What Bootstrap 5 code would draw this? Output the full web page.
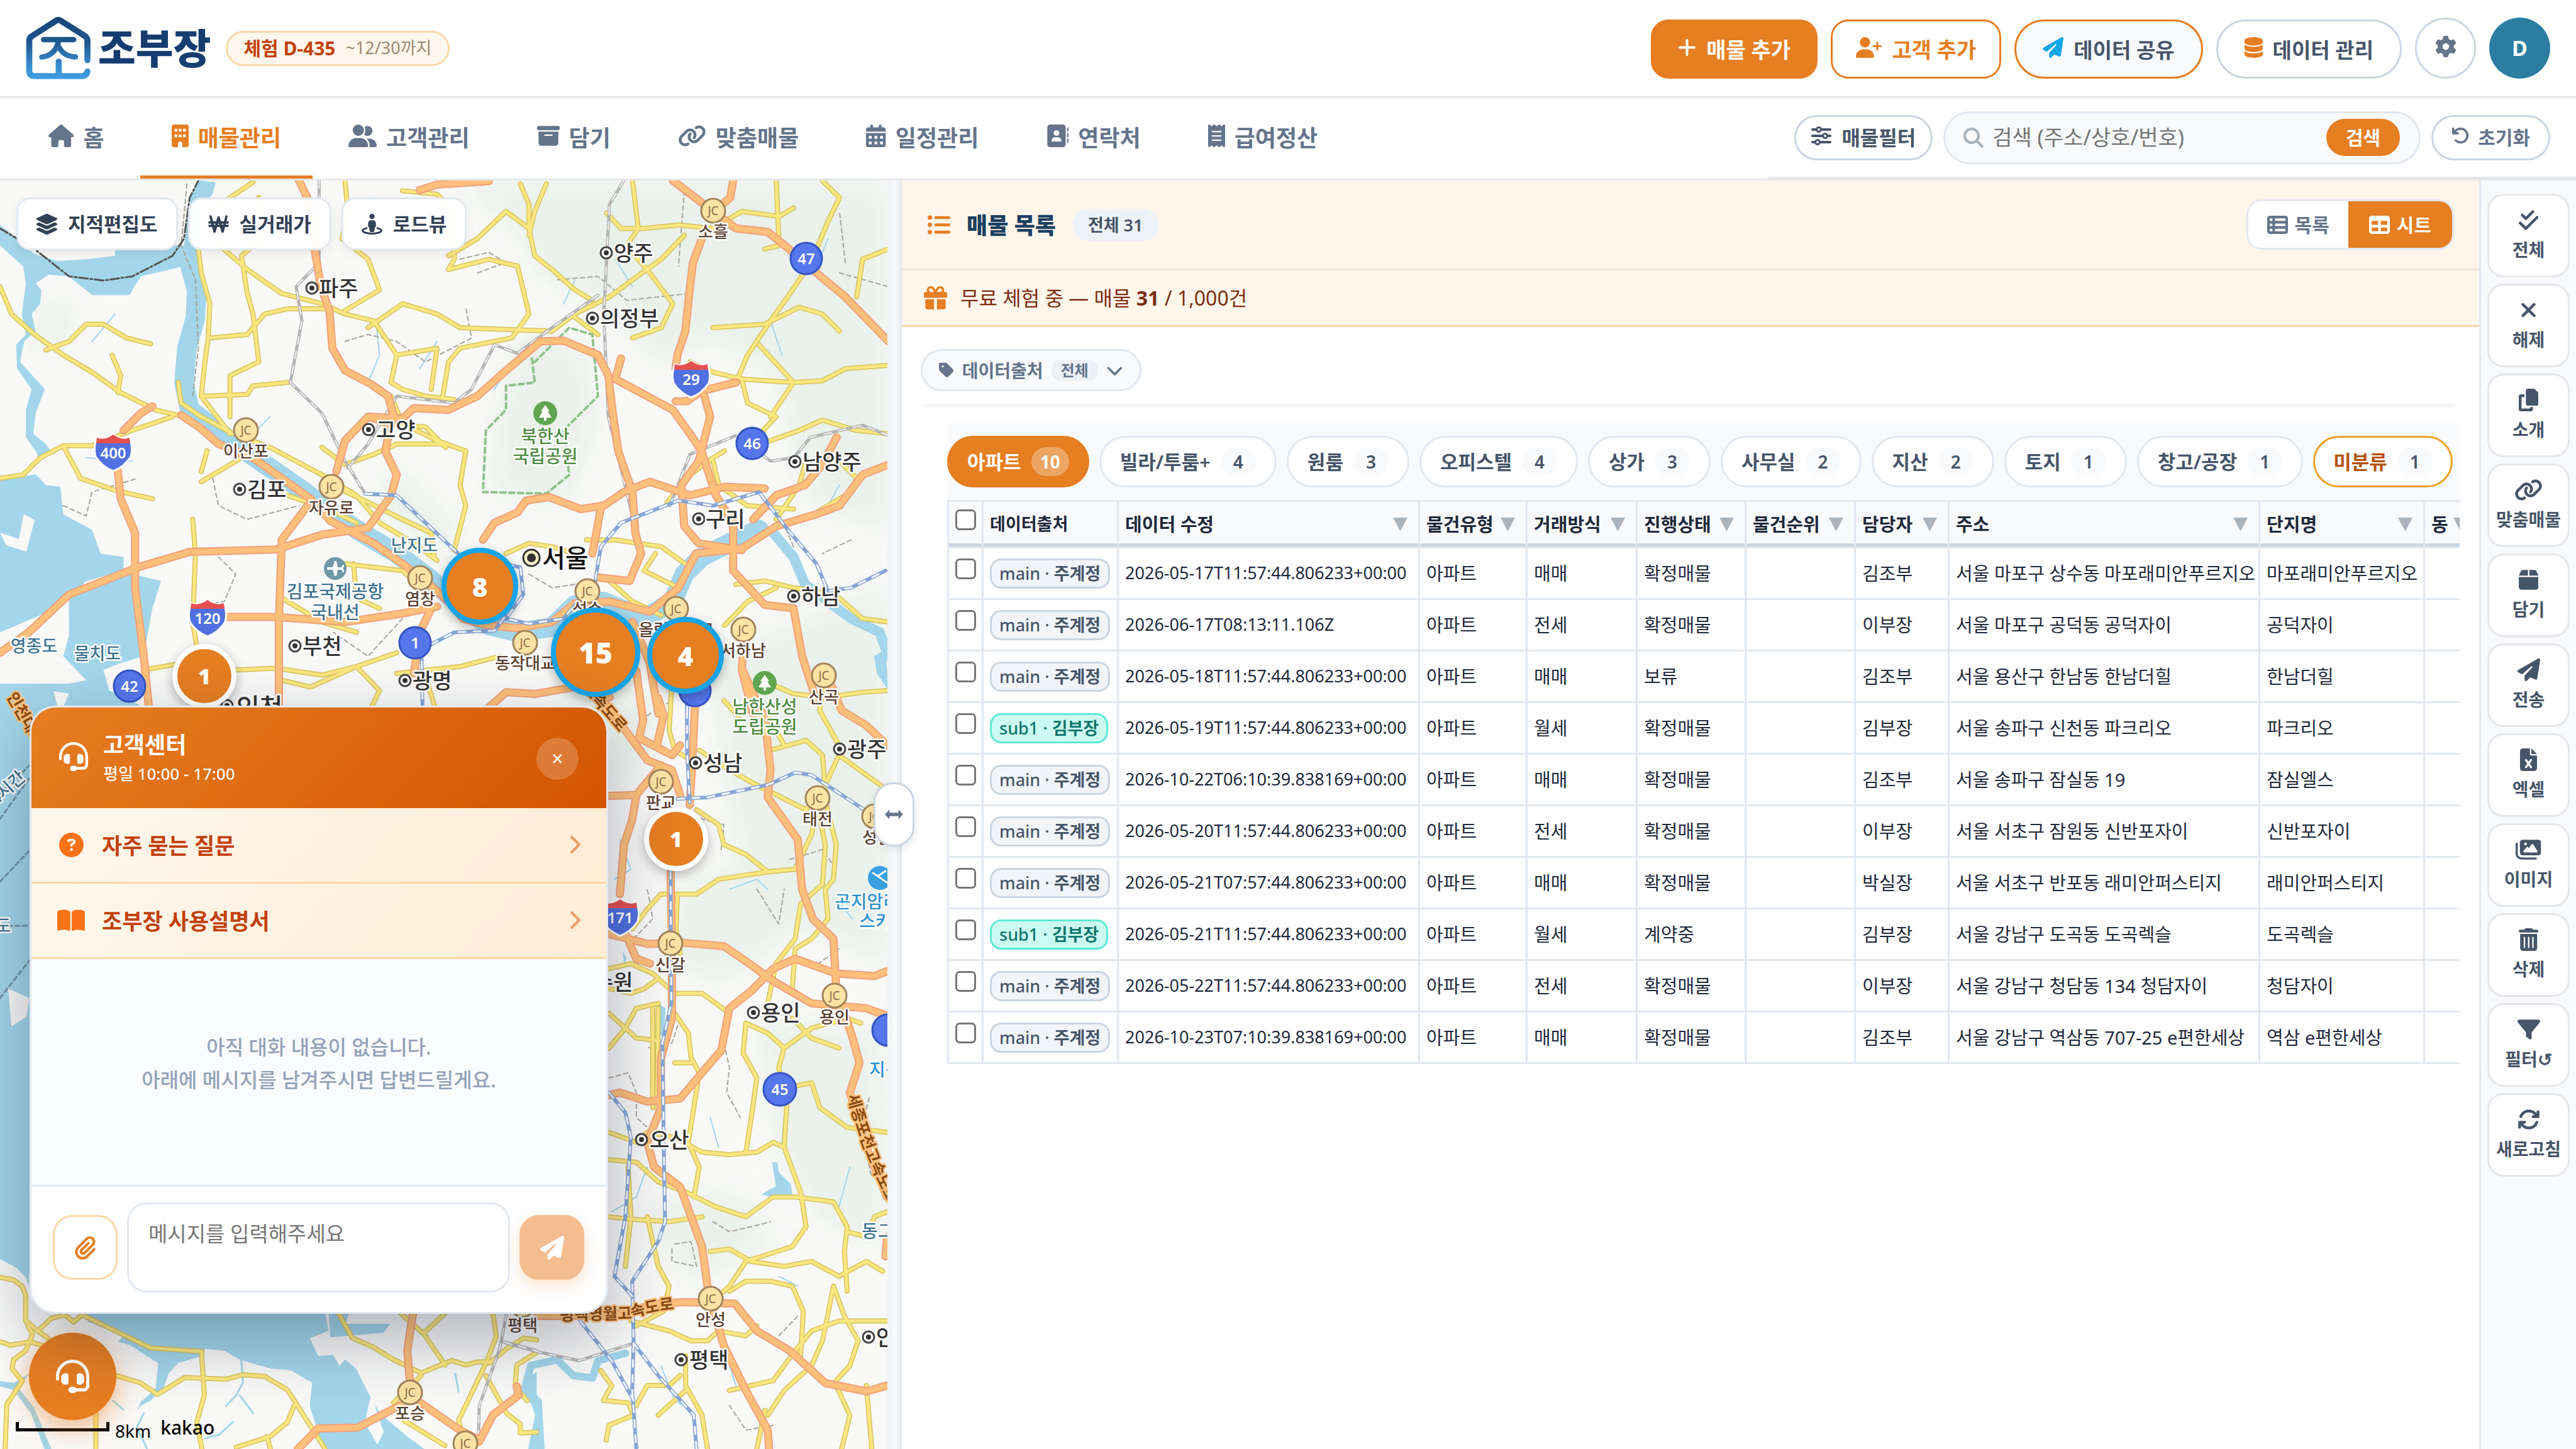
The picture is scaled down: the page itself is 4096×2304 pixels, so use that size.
<!DOCTYPE html>
<html lang="ko">
<head>
<meta charset="utf-8">
<meta name="viewport" content="width=device-width, initial-scale=1">
<title>조부장 - 매물관리</title>
<link href="https://cdn.jsdelivr.net/npm/bootstrap@5.3.0/dist/css/bootstrap.min.css" rel="stylesheet">
<style>
:root{--brand:#e67e22;--line:#e2e8f0;--line2:#cbd5e1;--ink:#1e293b;--mid:#475569;--soft:#64748b}
body{font-family:"Noto Sans","Noto Sans CJK KR",sans-serif;font-size:32px;line-height:1.5;color:var(--ink);overflow:hidden;background:#fff}
.ico{height:1em;width:auto;fill:currentColor;flex:none;display:block}
.btn{--bs-btn-border-width:3px;display:inline-flex;align-items:center;justify-content:center;white-space:nowrap;line-height:1.5;padding:0;flex:none}
.brandmark{margin:-4px 0 -3px}
.brandtxt{font-size:65px;font-weight:900;line-height:1;color:#163d70;margin-left:11px}
/* top bar */
.topbar{padding:28px 41px 28px 40px;border-bottom:3px solid #e5e7eb}
.trial{height:56px;border:3px solid #fbd7a8;border-radius:28px;background:#fff7ed;padding:0 26px 0 25px;font-size:30px;font-weight:700;color:#c2410c}
.trial span{font-size:27px;font-weight:400;color:#a08874}
.acts{gap:21px}
.act{height:94px;font-size:34px;font-weight:700;padding:3px 40px 0;gap:16px;border-radius:28px}
.act.btn-line{padding:3px 37px 0}
.act .ico{font-size:33px;margin-bottom:8px}
.act.pill{border-radius:47px;padding:3px 42px 0;font-size:33px;font-weight:600}
.btn-fill,.btn-fill:hover{background:var(--brand);border-color:var(--brand);color:#fff}
.btn-line{background:#fff;border-color:var(--brand);color:var(--brand)}
.btn-grey{background:#fff;border-color:var(--line2);color:var(--mid)}
.round{width:97px;height:97px;border-radius:50%}
#share{background:#f8fafc;color:var(--mid)}
#share .ico{color:#0ea5e9}
#manage .ico{color:var(--brand)}
#gearb{font-size:34px;color:var(--soft);padding-bottom:5px}
#me{background:#2b7da1;color:#fff;font-size:34px;font-weight:700}
/* navigation */
.navrow{height:131px;border-bottom:3px solid #e5e7eb;padding-left:27px}
.tabs-main{gap:7px}
.tabs-main .nav-link{height:128px;display:flex;align-items:center;gap:15px;padding:4px 50px 0;font-size:36px;font-weight:600;color:var(--soft);border-bottom:5px solid transparent}
.tabs-main .nav-link.active{color:var(--brand);border-color:var(--brand)}
.tabs-main .ico{margin-bottom:8px}
.navright{padding:0 41px;gap:17px;border-bottom:3px solid #e5e7eb}
.navright .btn{height:72px;border-radius:36px;padding:0 24px;gap:16px;font-size:32px;font-weight:600}
.navright .btn .ico{margin-bottom:6px;font-size:32px}
.navright .reset{font-size:30px;color:var(--soft);padding:0 29px;gap:13px}
.navright .reset .ico{font-size:29px}
.find{width:759px;height:84px;border:3px solid var(--line);border-radius:42px;background:#f8fafc;padding:0 30px 0 29px;gap:14px;color:#a7b1bd}
.find .form-control,.find .form-control:focus{border:0;background:none;box-shadow:none;font-size:34px;padding:0;color:#333}
.find .form-control::placeholder{color:#757575}
.navright .find .btn{height:59px;border-radius:30px;font-size:30px;padding:0 28px}
/* map */
.mapcol{flex:0 0 34.45%;background:#f9f9f8}
.mapcol .mapsvg{position:absolute;left:0;top:0;width:1411px;height:2017px;display:block}
.mapsvg path{vector-effect:non-scaling-stroke;stroke-linejoin:round;stroke-linecap:round}
.mapsvg text{paint-order:stroke;stroke:#fff;stroke-width:5px;stroke-linejoin:round}
.mapsvg .num text{stroke:none}
.mapsvg .hwn text{fill:#8a4a12;stroke:#fcc27c;font-size:25px}
.mapsvg .city{font-size:34px;font-weight:500;fill:#333}
.mapsvg .jl{font-size:26px;font-weight:500;fill:#5b3f30;text-anchor:middle}
.maptools{position:absolute;left:26px;top:27px;gap:16px}
.maptools .btn{height:84px;border-radius:22px;border-color:var(--line);background:rgba(255,255,255,.96);font-size:31px;font-weight:600;color:#334155;padding:0 29px;gap:17px;box-shadow:0 5px 15px rgba(0,0,0,.08)}
.maptools .ico{font-size:33px}
.cluster{position:absolute;border-radius:50%;background:var(--brand);color:#fff;border:8px solid #16a4e6;width:122px;height:122px;font-size:42px;font-weight:900;display:flex;align-items:center;justify-content:center;transform:translate(-50%,-50%);box-shadow:0 6px 18px rgba(0,0,0,.28)}
.cluster.big{width:142px;height:142px;font-size:46px}
.cluster.one{width:102px;height:102px;border-color:#fff;font-size:34px}
.mapscale{position:absolute;left:25px;bottom:14px;gap:9px;color:#000}
.mapscale i{width:149px;height:15px;border:5px solid #000;border-top:0;margin-bottom:14px}
.mapscale span{font-size:28px;line-height:30px}
.mapscale b{font-size:30px;line-height:40px;font-weight:500;margin-left:6px}
.fab{position:absolute;left:46px;bottom:46px;width:139px;height:139px;border-radius:50%;font-size:53px;box-shadow:0 14px 40px rgba(230,126,34,.5)}
/* help desk window */
.desk{position:absolute;left:47px;top:835px;width:920px;border:3px solid var(--line);border-radius:41px;overflow:hidden;background:#fff;box-shadow:0 40px 110px rgba(15,23,42,.32)}
.deskhead{height:160px;padding:2px 44px 0;background:linear-gradient(135deg,#e67e22,#d35400);color:#fff;gap:24px}
.deskhead .ico{font-size:46px;margin-bottom:6px}
.deskhead h2{font-size:36px;font-weight:700;line-height:48px;margin:0}
.deskhead p{font-size:26px;line-height:42px;margin:0;font-weight:500;opacity:.95}
.deskhead .btn{width:67px;height:67px;border-radius:50%;background:rgba(255,255,255,.2);color:#fff;font-size:32px;border:0}
.faq{height:120px;padding:3px 41px 0 39px;background:linear-gradient(135deg,#fff7ed,#ffedd5);border-bottom:3px solid #fbd7a8;color:#c2410c;font-size:35px;font-weight:700;text-decoration:none}
.faq .faqico{width:48px;margin:0 25px 4px 0;color:#f97316;font-size:39px;display:flex;justify-content:center}
.faq .go{color:#ee9b66;font-size:32px;margin:0 0 4px auto}
.talk{height:362px;background:#fafcfe;border-bottom:3px solid var(--line);color:#94a3b8;font-size:32px;line-height:52px;font-weight:500;padding-bottom:28px}
.compose{padding:25px 35px 31px 34px;gap:15px}
.compose .btn{width:103px;height:103px;border-radius:31px;font-size:38px}
.compose .clip{border-color:#fbd7a8;color:var(--brand);background:#fff}
.compose .send{background:#f4bd90;border:0;color:#fff;box-shadow:0 10px 26px rgba(230,126,34,.22)}
.compose textarea,.compose textarea:focus{height:143px;border:3px solid var(--line);border-radius:31px;resize:none;font-size:33px;padding:22px 31px;box-shadow:none}
.compose textarea::placeholder{color:#757575}
/* divider */
.split{flex:0 0 23px;background:linear-gradient(90deg,#f1f3f5,#f8fafc 60%,#eceff2);border-right:3px solid var(--line)}
.grip{position:absolute;left:-22px;top:957px;width:65px;height:102px;border-radius:31px;background:#fff;border:3px solid var(--line2);color:var(--soft);z-index:3;box-shadow:0 4px 14px rgba(0,0,0,.1)}
.grip .ico{font-size:18px}
/* list panel */
.panel{min-width:0}
.phead{height:143px;background:#fff5eb;border-bottom:3px solid #f1e4d9;padding:0 40px}
.phead>.ico{font-size:37px;color:var(--brand)}
.phead h1{font-size:36px;font-weight:800;color:#1b4060;margin:0 26px;padding-top:4px}
.total{height:51px;line-height:51px;border-radius:26px;background:#edf2f7;color:#475569;font-size:27px;font-weight:600;padding:0 25px}
.mode{border:3px solid var(--line);border-radius:24px;overflow:hidden;height:80px}
.mode .btn{border:0;border-radius:0;height:74px;font-size:30px;font-weight:600;gap:11px;padding:0 30px;color:var(--soft);background:#fff}
.mode .btn.on{background:var(--brand);color:#fff;padding:0 33px}
.mode .ico{font-size:33px}
.notice{height:90px;background:#fff7eb;border-bottom:3px solid #f8d5aa;padding:0 35px;gap:21px;font-size:32px;color:#7c2d12}
.notice .ico{font-size:37px;color:var(--brand)}
.filters{margin:0 31px 0 30px;padding:35px 0 20px;box-shadow:0 9px 9px -6px rgba(0,0,0,.09)}
.src{height:67px;border:3px solid var(--line);border-radius:34px;background:#f8fafc;color:var(--soft);font-size:28px;font-weight:600;padding:0 26px;gap:13px}
.src small{font-size:24px;font-weight:700;background:#edf1f5;border-radius:14px;line-height:33px;padding:0 15px}
.src .ico{font-size:27px}
.sheetwrap{margin:30px 31px 0 72px;overflow:hidden}
.kinds{background:#f8fafc;padding:21px 0 20px;border-bottom:3px solid var(--line);gap:16px}
.kinds .btn{height:82px;border-radius:41px;border-color:var(--line);background:#fff;color:var(--mid);font-size:31px;font-weight:600;padding:0 30px;gap:16px}
.kinds .btn span{min-width:56px;height:46px;line-height:46px;border-radius:23px;background:#f8fafc;font-size:28px;padding:0 14px}
.kinds .btn.on{background:var(--brand);border-color:var(--brand);color:#fff;font-weight:700;padding:0 29px}
.kinds .btn.on span{background:rgba(255,255,255,.3)}
.kinds .btn.none{border-color:#eba024;color:#b45309;padding:0 29px}
.kinds .btn.none span{color:var(--mid)}
.table.sheet{width:2438px;table-layout:fixed;border-collapse:separate;border-spacing:0;margin:0;color:var(--ink)}
.table.sheet>:not(caption)>*>*{padding:0 10px;border:0 solid var(--line);border-width:0 3px 3px 0;height:82px;font-size:29px;vertical-align:middle;white-space:nowrap;box-shadow:none;overflow:hidden;background:#fff;color:var(--ink)}
.table.sheet>:not(caption)>*>:first-child{border-left-width:3px;padding:0 0 14px 10px;line-height:0}
.table.sheet>thead>tr>th{height:74px;background:#f9fafc;font-weight:600;box-shadow:inset 0 -5px 0 var(--line2)}
.table.sheet>thead>tr>th.sm{font-size:27px}
.table.sheet>tbody>tr>td.dt{font-size:27px}
.sheet input{appearance:none;width:33px;height:33px;border:3px solid #767676;border-radius:7px;background:#fff;margin:0}
.sortb{border:0;background:none;padding:0;width:23px;height:21px;margin-right:7px;flex:none}
.sortb i{display:block;border:11px solid transparent;border-top:21px solid #abb3bc;border-bottom:0}
.tagm{display:inline-block;height:48px;line-height:42px;border:3px solid var(--line2);border-radius:18px;background:#f1f5f9;color:var(--mid);font-size:27px;font-weight:500;padding:0 12px}
.tagm b{font-weight:700}
.tagm.sub{background:#ccfbf1;border-color:#5eead4;color:#0f766e}
/* tool rail */
.rail{flex:0 0 154px;border-left:3px solid var(--line);background:#f8fafc;padding:21px 10px;gap:10px}
.rail .btn{height:133px;flex-direction:column;gap:8px;border-color:#e5e7eb;border-radius:26px;background:#fff;color:var(--mid);font-size:28px;font-weight:600}
.rail .ico{font-size:36px}
</style>
</head>
<body>
<svg class="d-none" xmlns="http://www.w3.org/2000/svg">
<symbol id="home" viewBox="0 0 576 512"><path d="M575.8 255.5c0 18-15 32.1-32 32.1h-32l.7 160.2c0 2.7-.2 5.4-.5 8.1V472c0 22.1-17.9 40-40 40H392c-22.1 0-40-17.9-40-40V384c0-17.7-14.3-32-32-32H256c-17.7 0-32 14.3-32 32v88c0 22.1-17.9 40-40 40H104c-22.1 0-40-17.9-40-40V287.6H32c-18 0-32-14-32-32.1c0-9 3-17 10-24L266.4 8c7-7 15-8 22-8s15 2 21 7L564.8 231.5c8 7 12 15 11 24z"/></symbol>
<symbol id="building" viewBox="0 0 384 512"><path d="M48 0C21.5 0 0 21.5 0 48V464c0 26.5 21.5 48 48 48h96V432c0-26.5 21.5-48 48-48s48 21.5 48 48v80h96c26.5 0 48-21.5 48-48V48c0-26.5-21.5-48-48-48H48zM64 240c0-8.8 7.2-16 16-16h32c8.8 0 16 7.2 16 16v32c0 8.8-7.2 16-16 16H80c-8.8 0-16-7.2-16-16V240zm112-16h32c8.8 0 16 7.2 16 16v32c0 8.8-7.2 16-16 16H176c-8.8 0-16-7.2-16-16V240c0-8.8 7.2-16 16-16zm80 16c0-8.8 7.2-16 16-16h32c8.8 0 16 7.2 16 16v32c0 8.8-7.2 16-16 16H272c-8.8 0-16-7.2-16-16V240zM80 96h32c8.8 0 16 7.2 16 16v32c0 8.8-7.2 16-16 16H80c-8.8 0-16-7.2-16-16V112c0-8.8 7.2-16 16-16zm80 16c0-8.8 7.2-16 16-16h32c8.8 0 16 7.2 16 16v32c0 8.8-7.2 16-16 16H176c-8.8 0-16-7.2-16-16V112zM272 96h32c8.8 0 16 7.2 16 16v32c0 8.8-7.2 16-16 16H272c-8.8 0-16-7.2-16-16V112c0-8.8 7.2-16 16-16z"/></symbol>
<symbol id="users" viewBox="0 0 640 512"><path d="M96 128a128 128 0 1 1 256 0A128 128 0 1 1 96 128zM0 482.3C0 383.8 79.8 304 178.3 304h91.4C368.2 304 448 383.8 448 482.3c0 16.4-13.3 29.7-29.7 29.7H29.7C13.3 512 0 498.7 0 482.3zM609.3 512H471.4c5.4-9.4 8.6-20.3 8.6-32v-8c0-60.7-27.1-115.2-69.8-151.8c2.4-.1 4.7-.2 7.1-.2h61.4C567.8 320 640 392.2 640 481.3c0 17-13.8 30.7-30.7 30.7zM432 256c-31 0-59-12.6-79.3-32.9C372.4 196.5 384 163.6 384 128c0-26.8-6.6-52.1-18.3-74.3C384.3 40.1 407.2 32 432 32c61.9 0 112 50.1 112 112s-50.1 112-112 112z"/></symbol>
<symbol id="archive" viewBox="0 0 512 512"><path d="M32 32H480c17.7 0 32 14.3 32 32V96c0 17.7-14.3 32-32 32H32C14.3 128 0 113.7 0 96V64C0 46.3 14.3 32 32 32zm0 128H480V416c0 35.3-28.7 64-64 64H96c-35.3 0-64-28.7-64-64V160zm128 80c0 8.8 7.2 16 16 16H336c8.8 0 16-7.2 16-16s-7.2-16-16-16H176c-8.8 0-16 7.2-16 16z"/></symbol>
<symbol id="link" viewBox="0 0 640 512"><path d="M579.8 267.7c56.5-56.5 56.5-148 0-204.5c-50-50-128.8-56.5-186.3-15.4l-1.6 1.1c-14.4 10.3-17.7 30.3-7.4 44.6s30.3 17.7 44.6 7.4l1.6-1.1c32.1-22.9 76-19.3 103.8 8.6c31.5 31.5 31.5 82.5 0 114L422.3 334.8c-31.5 31.5-82.5 31.5-114 0c-27.9-27.9-31.5-71.8-8.6-103.8l1.1-1.6c10.3-14.4 6.9-34.4-7.4-44.6s-34.4-6.9-44.6 7.4l-1.1 1.6C206.5 251.2 213 330 263 380c56.5 56.5 148 56.5 204.5 0L579.8 267.7zM60.2 244.3c-56.5 56.5-56.5 148 0 204.5c50 50 128.8 56.5 186.3 15.4l1.6-1.1c14.4-10.3 17.7-30.3 7.4-44.6s-30.3-17.7-44.6-7.4l-1.6 1.1c-32.1 22.9-76 19.3-103.8-8.6C74 372 74 321 105.5 289.5L217.7 177.2c31.5-31.5 82.5-31.5 114 0c27.9 27.9 31.5 71.8 8.6 103.9l-1.1 1.6c-10.3 14.4-6.9 34.4 7.4 44.6s34.4 6.9 44.6-7.4l1.1-1.6C433.5 260.8 427 182 377 132c-56.5-56.5-148-56.5-204.5 0L60.2 244.3z"/></symbol>
<symbol id="cal" viewBox="0 0 448 512"><path fill-rule="evenodd" d="M128 0c17.7 0 32 14.3 32 32V64H288V32c0-17.7 14.3-32 32-32s32 14.3 32 32V64h48c26.5 0 48 21.5 48 48v48H0V112C0 85.5 21.5 64 48 64H96V32c0-17.7 14.3-32 32-32zM0 192H448V464c0 26.5-21.5 48-48 48H48c-26.5 0-48-21.5-48-48V192zM64 256v64h64v-64zM192 256v64h64v-64zM320 256v64h64v-64zM64 384v64h64v-64zM192 384v64h64v-64zM320 384v64h64v-64z"/></symbol>
<symbol id="book" viewBox="0 0 512 512"><path fill-rule="evenodd" d="M96 0C60.7 0 32 28.7 32 64V448c0 35.3 28.7 64 64 64H384c35.3 0 64-28.7 64-64V64c0-35.3-28.7-64-64-64H96zM208 288h64c44.2 0 80 35.8 80 80c0 8.8-7.2 16-16 16H144c-8.8 0-16-7.2-16-16c0-44.2 35.8-80 80-80zm-32-96a64 64 0 1 1 128 0 64 64 0 1 1-128 0zM512 80c0-8.8-7.2-16-16-16s-16 7.2-16 16v64c0 8.8 7.2 16 16 16s16-7.2 16-16V80zM496 192c-8.8 0-16 7.2-16 16v64c0 8.8 7.2 16 16 16s16-7.2 16-16V208c0-8.8-7.2-16-16-16zm16 144c0-8.8-7.2-16-16-16s-16 7.2-16 16v64c0 8.8 7.2 16 16 16s16-7.2 16-16V336z"/></symbol>
<symbol id="receipt" viewBox="0 0 384 512"><path d="M14 2.2C22.5-1.7 32.5-.3 39.6 5.8L80 40.4 120.4 5.8c9-7.7 22.3-7.7 31.2 0L192 40.4 232.4 5.8c9-7.7 22.3-7.7 31.2 0L304 40.4 344.4 5.8c7.1-6.1 17.1-7.5 25.6-3.6s14 12.4 14 21.8V488c0 9.4-5.5 17.9-14 21.8s-18.5 2.5-25.6-3.6L304 471.6l-40.4 34.6c-9 7.7-22.3 7.7-31.2 0L192 471.6l-40.4 34.6c-9 7.7-22.3 7.7-31.2 0L80 471.6 39.6 506.2c-7.1 6.1-17.1 7.5-25.6 3.6S0 497.4 0 488V24C0 14.6 5.5 6.1 14 2.2zM96 144c-8.8 0-16 7.2-16 16s7.2 16 16 16H288c8.8 0 16-7.2 16-16s-7.2-16-16-16H96zM80 352c0 8.8 7.2 16 16 16H288c8.8 0 16-7.2 16-16s-7.2-16-16-16H96c-8.8 0-16 7.2-16 16zM96 240c-8.8 0-16 7.2-16 16s7.2 16 16 16H288c8.8 0 16-7.2 16-16s-7.2-16-16-16H96z"/></symbol>
<symbol id="plus" viewBox="0 0 448 512"><path d="M256 80c0-17.7-14.3-32-32-32s-32 14.3-32 32V224H48c-17.7 0-32 14.3-32 32s14.3 32 32 32H192V432c0 17.7 14.3 32 32 32s32-14.3 32-32V288H400c17.7 0 32-14.3 32-32s-14.3-32-32-32H256V80z"/></symbol>
<symbol id="userplus" viewBox="0 0 640 512"><path d="M96 128a128 128 0 1 1 256 0A128 128 0 1 1 96 128zM0 482.3C0 383.8 79.8 304 178.3 304h91.4C368.2 304 448 383.8 448 482.3c0 16.4-13.3 29.7-29.7 29.7H29.7C13.3 512 0 498.7 0 482.3zM504 312V248H440c-13.3 0-24-10.7-24-24s10.7-24 24-24h64V136c0-13.3 10.7-24 24-24s24 10.7 24 24v64h64c13.3 0 24 10.7 24 24s-10.7 24-24 24H552v64c0 13.3-10.7 24-24 24s-24-10.7-24-24z"/></symbol>
<symbol id="plane" viewBox="0 0 512 512"><path d="M498.1 5.6c10.1 7 15.4 19.1 13.5 31.2l-64 416c-1.5 9.7-7.4 18.2-16 23s-18.9 5.4-28 1.6L284 427.7l-68.5 74.1c-8.9 9.7-22.9 12.9-35.2 8.1S160 493.2 160 480V396.4c0-4 1.5-7.8 4.2-10.7L331.8 202.8c5.8-6.3 5.6-16-.4-22s-15.7-6.4-22-.7L106 360.8 17.7 316.6C7.1 311.3 .3 300.7 0 288.9s5.9-22.8 16.1-28.7l448-256c10.7-6.1 23.9-5.5 34 1.4z"/></symbol>
<symbol id="db" viewBox="0 0 448 512"><path d="M448 80v48c0 44.2-100.3 80-224 80S0 172.2 0 128V80C0 35.8 100.3 0 224 0S448 35.8 448 80zM393.2 214.7c20.8-7.4 39.9-16.9 54.8-28.6V288c0 44.2-100.3 80-224 80S0 332.2 0 288V186.1c14.9 11.8 34 21.2 54.8 28.6C99.7 230.7 159.5 240 224 240s124.3-9.3 169.2-25.3zM0 346.1c14.9 11.8 34 21.2 54.8 28.6C99.7 390.7 159.5 400 224 400s124.3-9.3 169.2-25.3c20.8-7.4 39.9-16.9 54.8-28.6V432c0 44.2-100.3 80-224 80S0 476.2 0 432V346.1z"/></symbol>
<symbol id="gear" viewBox="0 0 512 512"><path d="M495.9 166.6c3.2 8.7 .5 18.4-6.4 24.6l-43.3 39.4c1.1 8.3 1.7 16.8 1.7 25.4s-.6 17.1-1.7 25.4l43.3 39.4c6.9 6.2 9.6 15.9 6.4 24.6c-4.4 11.9-9.7 23.3-15.8 34.3l-4.7 8.1c-6.6 11-14 21.4-22.1 31.2c-5.9 7.2-15.7 9.6-24.5 6.8l-55.7-17.7c-13.4 10.3-28.2 18.9-44 25.4l-12.5 57.1c-2 9.1-9 16.3-18.2 17.8c-13.8 2.3-28 3.5-42.5 3.5s-28.7-1.2-42.5-3.5c-9.2-1.5-16.2-8.7-18.2-17.8l-12.5-57.1c-15.8-6.5-30.6-15.1-44-25.4L83.1 425.9c-8.8 2.8-18.6 .3-24.5-6.8c-8.1-9.8-15.5-20.2-22.1-31.2l-4.7-8.1c-6.1-11-11.4-22.4-15.8-34.3c-3.2-8.7-.5-18.4 6.4-24.6l43.3-39.4C64.6 273.1 64 264.6 64 256s.6-17.1 1.7-25.4L22.4 191.2c-6.9-6.2-9.6-15.9-6.4-24.6c4.4-11.9 9.7-23.3 15.8-34.3l4.7-8.1c6.6-11 14-21.4 22.1-31.2c5.9-7.2 15.7-9.6 24.5-6.8l55.7 17.7c13.4-10.3 28.2-18.9 44-25.4l12.5-57.1c2-9.1 9-16.3 18.2-17.8C227.3 1.2 241.5 0 256 0s28.7 1.2 42.5 3.5c9.2 1.5 16.2 8.7 18.2 17.8l12.5 57.1c15.8 6.5 30.6 15.1 44 25.4l55.7-17.7c8.8-2.8 18.6-.3 24.5 6.8c8.1 9.8 15.5 20.2 22.1 31.2l4.7 8.1c6.1 11 11.4 22.4 15.8 34.3zM256 336a80 80 0 1 0 0-160 80 80 0 1 0 0 160z"/></symbol>
<symbol id="sliders" viewBox="0 0 512 512"><path d="M0 416c0 17.7 14.3 32 32 32l54.7 0c12.3 28.3 40.5 48 73.3 48s61-19.7 73.3-48L480 448c17.7 0 32-14.3 32-32s-14.3-32-32-32l-246.7 0c-12.3-28.3-40.5-48-73.3-48s-61 19.7-73.3 48L32 384c-17.7 0-32 14.3-32 32zm128 0a32 32 0 1 1 64 0 32 32 0 1 1-64 0zM320 256a32 32 0 1 1 64 0 32 32 0 1 1-64 0zm32-80c-32.8 0-61 19.7-73.3 48L32 224c-17.7 0-32 14.3-32 32s14.3 32 32 32l246.7 0c12.3 28.3 40.5 48 73.3 48s61-19.7 73.3-48l54.7 0c17.7 0 32-14.3 32-32s-14.3-32-32-32l-54.7 0c-12.3-28.3-40.5-48-73.3-48zM192 128a32 32 0 1 1 0-64 32 32 0 1 1 0 64zm73.3-64C253 35.7 224.8 16 192 16s-61 19.7-73.3 48L32 64C14.3 64 0 78.3 0 96s14.3 32 32 32l86.7 0c12.3 28.3 40.5 48 73.3 48s61-19.7 73.3-48L480 128c17.7 0 32-14.3 32-32s-14.3-32-32-32L265.3 64z"/></symbol>
<symbol id="glass" viewBox="0 0 512 512"><path d="M416 208c0 45.9-14.9 88.3-40 122.7L502.6 457.4c12.5 12.5 12.5 32.8 0 45.3s-32.8 12.5-45.3 0L330.7 376c-34.4 25.2-76.8 40-122.7 40C93.1 416 0 322.9 0 208S93.1 0 208 0S416 93.1 416 208zM208 352a144 144 0 1 0 0-288 144 144 0 1 0 0 288z"/></symbol>
<symbol id="undo" viewBox="0 0 512 512"><path d="M125.7 160H176c17.7 0 32 14.3 32 32s-14.3 32-32 32H48c-17.7 0-32-14.3-32-32V64c0-17.7 14.3-32 32-32s32 14.3 32 32v51.2L97.6 97.6c87.5-87.5 229.3-87.5 316.8 0s87.5 229.3 0 316.8s-229.3 87.5-316.8 0c-12.5-12.5-12.5-32.8 0-45.3s32.8-12.5 45.3 0c62.5 62.5 163.8 62.5 226.3 0s62.5-163.8 0-226.3s-163.8-62.5-226.3 0L125.7 160z"/></symbol>
<symbol id="list" viewBox="0 0 512 512"><path d="M64 144a48 48 0 1 0 0-96 48 48 0 1 0 0 96zM192 64c-17.7 0-32 14.3-32 32s14.3 32 32 32H480c17.7 0 32-14.3 32-32s-14.3-32-32-32H192zm0 160c-17.7 0-32 14.3-32 32s14.3 32 32 32H480c17.7 0 32-14.3 32-32s-14.3-32-32-32H192zm0 160c-17.7 0-32 14.3-32 32s14.3 32 32 32H480c17.7 0 32-14.3 32-32s-14.3-32-32-32H192zM64 464a48 48 0 1 0 0-96 48 48 0 1 0 0 96zm48-208a48 48 0 1 0-96 0 48 48 0 1 0 96 0z"/></symbol>
<symbol id="tlist" viewBox="0 0 512 512"><path fill-rule="evenodd" d="M0 96C0 60.7 28.7 32 64 32H448c35.3 0 64 28.7 64 64V416c0 35.3-28.7 64-64 64H64c-35.3 0-64-28.7-64-64V96zm64 0v64h64V96H64zm384 0H192v64H448V96zM64 224v64h64V224H64zm384 0H192v64H448V224zM64 352v64h64V352H64zm384 0H192v64H448V352z"/></symbol>
<symbol id="table" viewBox="0 0 512 512"><path fill-rule="evenodd" d="M64 256V160H224v96H64zm0 64H224v96H64V320zm224 96V320H448v96H288zM448 256H288V160H448v96zM64 32C28.7 32 0 60.7 0 96V416c0 35.3 28.7 64 64 64H448c35.3 0 64-28.7 64-64V96c0-35.3-28.7-64-64-64H64z"/></symbol>
<symbol id="gift" viewBox="0 0 512 512"><path d="M190.5 68.8L225.3 128H152c-22.1 0-40-17.9-40-40s17.9-40 40-40h2.2c14.9 0 28.8 7.9 36.3 20.8zM64 88c0 14.4 3.5 28 9.6 40H32c-17.7 0-32 14.3-32 32v64c0 17.7 14.3 32 32 32H480c17.7 0 32-14.3 32-32V160c0-17.7-14.3-32-32-32H438.4c6.1-12 9.6-25.6 9.6-40c0-48.6-39.4-88-88-88h-2.2c-31.9 0-61.5 16.9-77.7 44.4L256 85.5l-24.1-41C215.7 16.9 186.1 0 154.2 0H152C103.4 0 64 39.4 64 88zm336 0c0 22.1-17.9 40-40 40H286.7l34.8-59.2C329.1 55.9 342.9 48 357.8 48H360c22.1 0 40 17.9 40 40zM32 288V464c0 26.5 21.5 48 48 48H224V288H32zM288 512H432c26.5 0 48-21.5 48-48V288H288V512z"/></symbol>
<symbol id="tag" viewBox="0 0 448 512"><path fill-rule="evenodd" d="M0 80V229.5c0 17 6.7 33.3 18.7 45.3l176 176c25 25 65.5 25 90.5 0L418.7 317.3c25-25 25-65.5 0-90.5l-176-176c-12-12-28.3-18.7-45.3-18.7H48C21.5 32 0 53.5 0 80zm112 32a32 32 0 1 1 0 64 32 32 0 1 1 0-64z"/></symbol>
<symbol id="down" viewBox="0 0 512 512"><path d="M233.4 406.6c12.5 12.5 32.8 12.5 45.3 0l192-192c12.5-12.5 12.5-32.8 0-45.3s-32.8-12.5-45.3 0L256 338.7 86.6 169.4c-12.5-12.5-32.8-12.5-45.3 0s-12.5 32.8 0 45.3l192 192z"/></symbol>
<symbol id="right" viewBox="96 0 256 512"><path d="M342.6 233.4c12.5 12.5 12.5 32.8 0 45.3l-192 192c-12.5 12.5-32.8 12.5-45.3 0s-12.5-32.8 0-45.3L274.7 256 105.4 86.6c-12.5-12.5-12.5-32.8 0-45.3s32.8-12.5 45.3 0l192 192z"/></symbol>
<symbol id="dcheck" viewBox="0 0 448 512"><path d="M342.6 86.6c12.5-12.5 12.5-32.8 0-45.3s-32.8-12.5-45.3 0L160 178.7l-57.4-57.4c-12.5-12.5-32.8-12.5-45.3 0s-12.5 32.8 0 45.3l80 80c12.5 12.5 32.8 12.5 45.3 0l160-160zm96 128c12.5-12.5 12.5-32.8 0-45.3s-32.8-12.5-45.3 0L160 402.7 54.6 297.4c-12.5-12.5-32.8-12.5-45.3 0s-12.5 32.8 0 45.3l128 128c12.5 12.5 32.8 12.5 45.3 0l256-256z"/></symbol>
<symbol id="xmark" viewBox="0 0 384 512"><path d="M342.6 150.6c12.5-12.5 12.5-32.8 0-45.3s-32.8-12.5-45.3 0L192 210.7 86.6 105.4c-12.5-12.5-32.8-12.5-45.3 0s-12.5 32.8 0 45.3L146.7 256 41.4 361.4c-12.5 12.5-12.5 32.8 0 45.3s32.8 12.5 45.3 0L192 301.3 297.4 406.6c12.5 12.5 32.8 12.5 45.3 0s12.5-32.8 0-45.3L237.3 256 342.6 150.6z"/></symbol>
<symbol id="copy" viewBox="0 0 448 512"><path d="M208 0H332.1c12.7 0 24.9 5.1 33.9 14.1l67.9 67.9c9 9 14.1 21.2 14.1 33.9V336c0 26.5-21.5 48-48 48H208c-26.5 0-48-21.5-48-48V48c0-26.5 21.5-48 48-48zM48 128h80v64H64V448H256V416h64v48c0 26.5-21.5 48-48 48H48c-26.5 0-48-21.5-48-48V176c0-26.5 21.5-48 48-48z"/></symbol>
<symbol id="box" viewBox="0 0 448 512"><path d="M50.7 58.5L0 160H208V32H93.7C75.5 32 58.9 42.3 50.7 58.5zM240 160H448L397.3 58.5C389.1 42.3 372.5 32 354.3 32H240V160zm208 32H0V416c0 35.3 28.7 64 64 64H384c35.3 0 64-28.7 64-64V192z"/></symbol>
<symbol id="excel" viewBox="0 0 384 512"><path d="M64 0C28.7 0 0 28.7 0 64V448c0 35.3 28.7 64 64 64H320c35.3 0 64-28.7 64-64V160H256c-17.7 0-32-14.3-32-32V0H64zM256 0V128H384L256 0zM155.7 250.2L192 302.1l36.3-51.9c7.6-10.9 22.6-13.5 33.4-5.9s13.5 22.6 5.9 33.4L221.3 344l46.4 66.2c7.6 10.9 5 25.8-5.9 33.4s-25.8 5-33.4-5.9L192 385.8l-36.3 51.9c-7.6 10.9-22.6 13.5-33.4 5.9s-13.5-22.6-5.9-33.4L162.7 344l-46.4-66.2c-7.6-10.9-5-25.8 5.9-33.4s25.8-5 33.4 5.9z"/></symbol>
<symbol id="images" viewBox="0 0 576 512"><path d="M160 32c-35.3 0-64 28.7-64 64V320c0 35.3 28.7 64 64 64H512c35.3 0 64-28.7 64-64V96c0-35.3-28.7-64-64-64H160zM396 138.7l96 144c4.9 7.4 5.4 16.8 1.2 24.6S480.9 320 472 320H200c-9.2 0-17.6-5.3-21.6-13.6s-2.9-18.2 2.9-25.4l64-80c4.6-5.7 11.4-9 18.7-9s14.2 3.3 18.7 9l17.3 21.6 56-84C360.5 132 368 128 376 128s15.5 4 20 10.7zM192 128a32 32 0 1 1 64 0 32 32 0 1 1-64 0zM48 120c0-13.3-10.7-24-24-24S0 106.7 0 120V344c0 75.1 60.9 136 136 136H456c13.3 0 24-10.7 24-24s-10.7-24-24-24H136c-48.6 0-88-39.4-88-88V120z"/></symbol>
<symbol id="trash" viewBox="0 0 448 512"><path fill-rule="evenodd" d="M135.2 17.7C140.6 6.8 151.7 0 163.8 0H284.2c12.1 0 23.2 6.8 28.6 17.7L320 32h96c17.7 0 32 14.3 32 32s-14.3 32-32 32H32C14.3 96 0 81.7 0 64S14.3 32 32 32h96l7.2-14.3zM32 128H416V448c0 35.3-28.7 64-64 64H96c-35.3 0-64-28.7-64-64V128zm96 64c-8.8 0-16 7.2-16 16V432c0 8.8 7.2 16 16 16s16-7.2 16-16V208c0-8.8-7.2-16-16-16zm96 0c-8.8 0-16 7.2-16 16V432c0 8.8 7.2 16 16 16s16-7.2 16-16V208c0-8.8-7.2-16-16-16zm96 0c-8.8 0-16 7.2-16 16V432c0 8.8 7.2 16 16 16s16-7.2 16-16V208c0-8.8-7.2-16-16-16z"/></symbol>
<symbol id="funnel" viewBox="0 0 512 512"><path d="M3.9 54.9C10.5 40.9 24.5 32 40 32H472c15.5 0 29.5 8.9 36.1 22.9s4.6 30.5-5.2 42.5L320 320.9V448c0 12.1-6.8 23.2-17.7 28.6s-23.8 4.3-33.5-3l-64-48c-8.1-6-12.8-15.5-12.8-25.6V320.9L9 97.3C-.7 85.4-2.8 68.8 3.9 54.9z"/></symbol>
<symbol id="rotate" viewBox="0 0 512 512"><path d="M105.1 202.6c7.7-21.8 20.2-42.3 37.8-59.8c62.5-62.5 163.8-62.5 226.3 0L386.3 160H352c-17.7 0-32 14.3-32 32s14.3 32 32 32H463.9c17.7 0 32-14.3 32-32V80c0-17.7-14.3-32-32-32s-32 14.3-32 32v35.2L414.4 97.6c-87.5-87.5-229.3-87.5-316.8 0C73.2 122 55.6 150.7 44.8 181.4c-5.9 16.7 2.9 34.9 19.5 40.8s34.9-2.9 40.8-19.5zM39 289.3c-5 1.5-9.8 4.2-13.7 8.2c-4 4-6.7 8.8-8.1 14c-.8 3-1.2 6-1.2 9V432c0 17.7 14.3 32 32 32s32-14.3 32-32V396.9l17.6 17.5c87.5 87.4 229.3 87.4 316.7 0c24.4-24.4 42.1-53.1 52.9-83.7c5.9-16.7-2.9-34.9-19.5-40.8s-34.9 2.9-40.8 19.5c-7.7 21.8-20.2 42.3-37.8 59.8c-62.5 62.5-163.8 62.5-226.3 0L125.6 352H160c17.7 0 32-14.3 32-32s-14.3-32-32-32H48.4c-3.2 0-6.4 .4-9.4 1.3z"/></symbol>
<symbol id="headset" viewBox="0 0 512 512"><path d="M256 48C141.1 48 48 141.1 48 256v40c0 13.3-10.7 24-24 24s-24-10.7-24-24V256C0 114.6 114.6 0 256 0S512 114.6 512 256V400.1c0 48.6-39.4 88-88.1 88L313.6 488c-8.3 14.3-23.8 24-41.6 24H240c-26.5 0-48-21.5-48-48s21.5-48 48-48h32c17.8 0 33.3 9.7 41.6 24l110.4 .1c22.1 0 40-17.9 40-40V256c0-114.9-93.1-208-208-208zM144 208h16c17.7 0 32 14.3 32 32V352c0 17.7-14.3 32-32 32H144c-35.3 0-64-28.7-64-64V272c0-35.3 28.7-64 64-64zm224 0c35.3 0 64 28.7 64 64v48c0 35.3-28.7 64-64 64H352c-17.7 0-32-14.3-32-32V240c0-17.7 14.3-32 32-32h16z"/></symbol>
<symbol id="quest" viewBox="0 0 512 512"><path d="M256 512A256 256 0 1 0 256 0a256 256 0 1 0 0 512zM169.8 165.3c7.9-22.3 29.1-37.3 52.8-37.3h58.3c34.9 0 63.1 28.3 63.1 63.1c0 22.6-12.1 43.5-31.7 54.8L280 264.4c-.2 13-10.9 23.6-24 23.6c-13.3 0-24-10.7-24-24V250.5c0-8.6 4.6-16.5 12.1-20.8l44.3-25.4c4.7-2.7 7.6-7.7 7.6-13.1c0-8.4-6.8-15.1-15.1-15.1H222.6c-3.4 0-6.4 2.1-7.5 5.3l-.4 1.2c-4.4 12.5-18.2 19-30.6 14.6s-19-18.2-14.6-30.6l.4-1.2zM224 352a32 32 0 1 1 64 0 32 32 0 1 1-64 0z"/></symbol>
<symbol id="open" viewBox="0 0 576 512"><path d="M249.6 471.5c10.8 3.8 22.4-4.1 22.4-15.5V78.6c0-4.2-1.6-8.4-5-11C247.4 52 202.4 32 144 32C93.5 32 46.3 45.3 18.1 56.1C6.8 60.5 0 71.7 0 83.8V454.1c0 11.9 12.8 20.2 24.1 16.5C55.6 460.1 105.5 448 144 448c33.9 0 79 14 105.6 23.5zm76.8 0C353 462 398.1 448 432 448c38.5 0 88.4 12.1 119.9 22.6c11.3 3.8 24.1-4.6 24.1-16.5V83.8c0-12.1-6.8-23.3-18.1-27.6C529.7 45.3 482.5 32 432 32c-58.4 0-103.4 20-123 35.6c-3.3 2.6-5 6.8-5 11V456c0 11.4 11.7 19.3 22.4 15.5z"/></symbol>
<symbol id="pclip" viewBox="0 0 448 512"><path d="M364.2 83.8c-24.4-24.4-64-24.4-88.4 0l-184 184c-42.1 42.1-42.1 110.3 0 152.4s110.3 42.1 152.4 0l152-152c10.9-10.9 28.7-10.9 39.6 0s10.9 28.7 0 39.6l-152 152c-64 64-167.6 64-231.6 0s-64-167.6 0-231.6l184-184c46.3-46.3 121.3-46.3 167.6 0s46.3 121.3 0 167.6l-176 176c-28.6 28.6-75 28.6-103.6 0s-28.6-75 0-103.6l144-144c10.9-10.9 28.7-10.9 39.6 0s10.9 28.7 0 39.6l-144 144c-6.7 6.7-6.7 17.7 0 24.4s17.7 6.7 24.4 0l176-176c24.4-24.4 24.4-64 0-88.4z"/></symbol>
<symbol id="layers" viewBox="32 0 512 512"><path d="M264.5 5.2c14.9-6.9 32.1-6.9 47 0l218.6 101c8.5 3.9 13.9 12.4 13.9 21.8s-5.4 17.9-13.9 21.8l-218.6 101c-14.9 6.9-32.1 6.9-47 0L45.9 149.8C37.4 145.8 32 137.3 32 128s5.4-17.9 13.9-21.8L264.5 5.2zM476.9 209.6l53.2 24.6c8.5 3.9 13.9 12.4 13.9 21.8s-5.4 17.9-13.9 21.8l-218.6 101c-14.9 6.9-32.1 6.9-47 0L45.9 277.8C37.4 273.8 32 265.3 32 256s5.4-17.9 13.9-21.8l53.2-24.6 152 70.2c23.4 10.8 50.4 10.8 73.8 0l152-70.2zm-152 198.2l152-70.2 53.2 24.6c8.5 3.9 13.9 12.4 13.9 21.8s-5.4 17.9-13.9 21.8l-218.6 101c-14.9 6.9-32.1 6.9-47 0L45.9 405.8C37.4 401.8 32 393.3 32 384s5.4-17.9 13.9-21.8l53.2-24.6 152 70.2c23.4 10.8 50.4 10.8 73.8 0z"/></symbol>
<symbol id="won" viewBox="0 0 512 512"><path fill="none" stroke="currentColor" stroke-width="60" stroke-linecap="round" stroke-linejoin="round" d="M60 64L156 440L256 90L356 440L452 64M32 214H480M32 296H480"/></symbol>
<symbol id="street" viewBox="0 0 512 512"><path d="M320 64A64 64 0 1 0 192 64a64 64 0 1 0 128 0zM240 160c-48 0-80 32-80 78v60c0 18 11 30 27 35l9 90c2 16 15 25 32 25h56c17 0 30-9 32-25l9-90c16-5 27-17 27-35v-60c0-46-32-78-80-78z"/><path fill="none" stroke="currentColor" stroke-width="48" stroke-linecap="round" d="M120 356C50 372 24 390 24 412c0 44 104 76 232 76s232-32 232-76c0-22-26-40-96-56"/></symbol>
<symbol id="lr" viewBox="0 0 512 320"><path d="M128 20v90H384V20L512 160 384 300V210H128v90L0 160z"/></symbol>
</svg>

<div class="vh-100 d-flex flex-column">
<header class="topbar d-flex align-items-end">
  <a href="#" class="d-flex align-items-center text-decoration-none align-self-center" aria-label="조부장">
    <svg class="brandmark" width="105" height="104" viewBox="50 40 370 365" fill="none" stroke-linecap="round" stroke-linejoin="round" stroke-width="34" role="img" aria-label="로고">
      <defs><linearGradient id="lg" gradientUnits="userSpaceOnUse" x1="0" y1="45" x2="0" y2="400"><stop offset="0" stop-color="#184477"/><stop offset=".4" stop-color="#1d568f"/><stop offset=".8" stop-color="#3a8fd2"/><stop offset="1" stop-color="#429de0"/></linearGradient></defs>
      <g stroke="url(#lg)"><path d="M399 292V184Q399 168 387 158L248 70Q236 62 224 70L86 158Q73 168 73 184V352Q75 381 104 381H372Q394 378 399 355"/><path stroke-width="30" d="M153 177H322M238 180Q222 265 143 274M238 215Q262 270 332 274"/><path d="M238 300V376"/></g>
    </svg>
    <span class="brandtxt">조부장</span>
  </a>
  <div class="trial d-flex align-items-center gap-3 ms-4 align-self-center">체험 D-435 <span>~12/30까지</span></div>
  <div class="acts d-flex align-items-end ms-auto">
    <button class="btn act btn-fill" type="button"><svg class="ico" viewBox="0 0 448 512"><use href="#plus"/></svg>매물 추가</button>
    <button class="btn act btn-line" type="button"><svg class="ico" viewBox="0 0 640 512"><use href="#userplus"/></svg>고객 추가</button>
    <button class="btn act btn-line pill" type="button" id="share"><svg class="ico" viewBox="0 0 512 512"><use href="#plane"/></svg>데이터 공유</button>
    <button class="btn act pill btn-grey" type="button" id="manage"><svg class="ico" viewBox="0 0 448 512"><use href="#db"/></svg>데이터 관리</button>
    <button class="btn round btn-grey" type="button" id="gearb" aria-label="설정"><svg class="ico" viewBox="0 0 512 512"><use href="#gear"/></svg></button>
    <button class="btn round" type="button" id="me">D</button>
  </div>
</header>

<nav class="navrow d-flex justify-content-between">
  <ul class="nav tabs-main flex-nowrap">
    <li class="nav-item"><a class="nav-link" href="#"><svg class="ico" viewBox="0 0 576 512"><use href="#home"/></svg>홈</a></li>
    <li class="nav-item"><a class="nav-link active" href="#"><svg class="ico" viewBox="0 0 384 512"><use href="#building"/></svg>매물관리</a></li>
    <li class="nav-item"><a class="nav-link" href="#"><svg class="ico" viewBox="0 0 640 512"><use href="#users"/></svg>고객관리</a></li>
    <li class="nav-item"><a class="nav-link" href="#"><svg class="ico" viewBox="0 0 512 512"><use href="#archive"/></svg>담기</a></li>
    <li class="nav-item"><a class="nav-link" href="#"><svg class="ico" viewBox="0 0 640 512"><use href="#link"/></svg>맞춤매물</a></li>
    <li class="nav-item"><a class="nav-link" href="#"><svg class="ico" viewBox="0 0 448 512"><use href="#cal"/></svg>일정관리</a></li>
    <li class="nav-item"><a class="nav-link" href="#"><svg class="ico" viewBox="0 0 512 512"><use href="#book"/></svg>연락처</a></li>
    <li class="nav-item"><a class="nav-link" href="#"><svg class="ico" viewBox="0 0 384 512"><use href="#receipt"/></svg>급여정산</a></li>
  </ul>
  <form class="navright d-flex align-items-center">
    <button class="btn btn-grey" type="button"><svg class="ico" viewBox="0 0 512 512"><use href="#sliders"/></svg>매물필터</button>
    <div class="find d-flex align-items-center">
      <svg class="ico" viewBox="0 0 512 512"><use href="#glass"/></svg>
      <input class="form-control" type="text" id="q" placeholder="검색 (주소/상호/번호)" aria-label="검색">
      <button class="btn btn-fill" type="button">검색</button>
    </div>
    <button class="btn btn-grey reset" type="button"><svg class="ico" viewBox="0 0 512 512"><use href="#undo"/></svg>초기화</button>
  </form>
</nav>

<div class="d-flex flex-grow-1 overflow-hidden">
<section class="mapcol position-relative overflow-hidden" aria-label="지도">
<svg class="mapsvg" viewBox="0 0 1411 2017" role="img" aria-label="서울 및 경기 지도">
<defs>
<g id="hw">
 <g transform="matrix(.9143 0 0 .5442 0 -5.4)">
 <path d="M520,10L540,80 546,200 558,320 573,390 578,500 600,565 645,605 675,640 685,700M730,38L760,22 850,12"/>
 <path d="M1170,10L1205,55 1240,100 1280,150 1335,160 1365,200 1420,280 1470,350 1545,480"/>
 <path d="M1275,10L1270,60 1245,95M1225,160L1205,250 1198,350 1192,450 1178,520 1175,560"/>
 <path d="M205,860L210,940 235,1040 235,1200 250,1400 260,1568M215,740L245,690 265,670"/>
 <path d="M0,1390L50,1330 120,1220 240,1140 330,1095 480,1088 560,1045 640,1025 680,930 690,870 670,800 680,720 640,700 600,770 585,860"/>
 <path d="M640,700L700,705 720,675 780,680 830,640 870,580 940,480 980,478 1040,520 1058,580 1065,680 1075,800 1100,920 1105,1040 1115,1100 1095,1180 1040,1170"/>
 <path d="M315,695L350,735 380,780 440,820 490,880 540,940 575,1005 650,1070 700,1130 740,1180 780,1240 805,1290 850,1310 900,1318 960,1300 1000,1245 1060,1240 1130,1270 1180,1200 1210,1100 1290,1085 1350,1020 1420,985 1460,960 1500,870 1545,840"/>
 <path d="M1080,530L1070,590 1170,680 1200,750 1220,800 1245,930 1275,1010 1275,1150 1330,1250 1380,1260 1395,1400 1420,1530"/>
 <path d="M1175,655L1195,655 1220,625 1280,600M1225,640L1235,700 1215,830 1185,900 1190,1020 1215,1070 1290,1090"/>
 <path d="M1310,1000L1350,930 1400,900 1430,840 1455,760"/>
 <path d="M840,1060L860,1010 900,980 915,945 955,935 1010,970 1050,960 1085,920 1130,890 1200,930 1260,905 1330,910M1045,965L1035,1060 1030,1100"/>
 <path d="M385,1285L480,1285 600,1300 700,1275 760,1255M535,960L490,1060 485,1300 485,1568M750,1260L730,1330 720,1450"/>
 <path d="M850,1550L880,1505 930,1510 1000,1490 1060,1520M1295,1330L1290,1440 1310,1568M1100,1300L1130,1420 1145,1568"/>
 </g>
 <g transform="matrix(.43537 0 0 .78911 768 779.67)">
 <path d="M640,55L660,90 635,150M400,30L600,180 690,200 720,250M560,0L585,100 570,135 690,170 720,150M775,60L765,180 755,270"/>
 <path d="M950,0L1030,100 1050,200 1040,255 1150,340 1165,440 1205,500 1280,540 1290,640 1350,740 1375,790 1340,850 1400,960 1475,1060"/>
 <path d="M1250,0L1310,80 1400,110 1476,150M460,252L560,250 545,300 515,350 500,450M560,250L650,190M460,530L520,530 560,580 610,590M460,530L600,550 730,548 880,555 960,585 1060,625 1200,670 1400,680 1476,695"/>
 <path d="M1476,605L1430,615 1290,610 1140,580 1060,600 980,645 900,680 870,765 800,810 720,862 600,868 500,850 460,855"/>
 <path d="M685,405L690,550 690,700 650,780 650,880 600,950 625,1000 720,1040 800,1160 825,1260 880,1360 960,1450 1040,1530 1045,1568"/>
 <path d="M200,1300L460,1300 640,1275 740,1272 920,1275 1000,1330 1120,1370 1250,1435 1400,1452 1476,1440M1476,1140L1470,1180"/>
 </g>
 <g transform="matrix(.54422 0 0 .28444 0 1675.7)">
 <path d="M1210,400L1190,650 1200,880M1195,930L1045,1080 930,1085 870,1200M1220,930L1340,1090 1400,1150M1510,850L1515,900 1440,1010 1400,1160"/>
 </g>
</g>
<g id="rd">
 <g transform="matrix(.9143 0 0 .5442 0 -5.4)">
 <path d="M0,320L20,400 60,460 110,520 160,570 210,630 270,680 320,700M80,505L120,480 150,430 180,430 220,470 262,487M195,520L210,580 205,630"/>
 <path d="M310,600L315,660 350,700 400,745 470,790 560,870 620,930 660,1010 720,1070 760,1120"/>
 <path d="M0,880L40,870 70,820 110,785 160,785 230,740 300,700M110,785L140,880 200,915 265,940"/>
 <path d="M360,100L400,60 440,15M345,210L350,280 365,370 362,470 355,560 350,640 400,750M365,470L430,460 460,400 500,385 570,385"/>
 <path d="M375,190L430,270 490,340 560,370 600,400 650,420 690,520 680,600 700,620 740,640 790,650"/>
 <path d="M350,640L430,635 440,610 500,600M450,60L455,180 420,230 430,340 440,400 450,540 400,580 400,700"/>
 <path d="M600,10L605,100 595,180 640,240 660,330 600,390M700,40L760,50 790,100 790,240 780,270 850,240 900,260"/>
 <path d="M780,230L830,180 880,100 920,150 930,230 960,270 1000,330 1030,360M905,20L920,80 920,150M950,20L930,100 920,170"/>
 <path d="M900,260L910,330 920,400 890,470 800,500 780,540 770,640M690,520L760,500 750,620M640,440L700,370 760,400 800,440 960,450"/>
 <path d="M960,450L1000,400 1060,350 1100,300 1150,240 1190,170M1040,460L1000,410M1100,10L1110,150 1090,200 1130,280 1170,370 1150,440 1100,470"/>
 <path d="M1055,105L1080,150 1120,150 1180,140 1240,150 1290,100 1355,115 1380,90M1350,10L1355,200 1330,210M1430,10L1460,60 1440,130 1410,250 1370,350 1340,420 1300,520 1280,600"/>
 <path d="M1545,210L1500,240 1490,350M1240,440L1330,430 1390,380 1430,400 1460,450M1545,550L1470,560 1430,595 1380,600 1290,590 1240,570 1200,540"/>
 <path d="M1290,590L1300,660 1350,700 1310,770 1340,770 1390,740 1430,710 1490,740 1545,750M1320,490L1380,600 1340,700"/>
 <path d="M680,640L700,720 760,770 810,800 800,900 810,960 790,1090M660,720L740,730 775,790M560,790L600,840 650,810 690,780 770,780"/>
 <path d="M420,820L380,860 350,890M360,800L350,860M590,910L640,950 700,1000 750,1040 755,1110M500,930L570,970 620,1010"/>
 <path d="M335,1000L340,1100 335,1300 345,1400 410,1440M410,1440L480,1435 560,1455 620,1430 690,1390M600,1130L700,1150 720,1180M615,1130L620,1230 660,1260"/>
 <path d="M250,1440L350,1410M490,1230L560,1300 620,1330M490,1470L540,1490 620,1430 660,1500 640,1568M740,1460L760,1568M690,1450L800,1430 870,1400"/>
 <path d="M880,1100L920,1070 960,1080 1000,1100M1060,1180L1100,1240 1150,1280M1020,1060L1070,1060 1150,1080 1200,1140M1140,1100L1120,1150 1180,1200"/>
 <path d="M1280,1190L1330,1180 1380,1200 1420,1210 1460,1230 1500,1290 1545,1300M1260,1310L1300,1240 1350,1200M1350,1000L1390,900 1400,840M1420,980L1480,920 1490,880 1460,830"/>
 <path d="M1240,830L1250,900 1300,960 1380,970M1160,950L1200,870 1240,820 1260,800M1340,1480L1380,1510 1440,1520 1500,1505 1545,1500"/>
 </g>
 <g transform="matrix(.43537 0 0 .78911 768 779.67)">
 <path d="M690,20L680,120 700,160 790,190M790,160L900,200 1000,230 1180,280 1250,230 1300,170 1476,240M880,60L930,90 1000,70 1040,90 1100,150"/>
 <path d="M1250,0L1230,80 1300,150M1050,160L1180,140 1240,170 1250,240M780,280L860,310 880,350 960,370 1040,405 1140,400 1200,330 1220,270"/>
 <path d="M1220,270L1250,350 1240,430 1160,470 1140,540 1070,590 1040,670M1240,240L1290,350 1280,420 1250,440 1260,500 1200,540 1140,560 1130,640"/>
 <path d="M545,520L600,480 650,450 780,450 860,420 1040,405M710,450L705,520 720,570M460,600L540,590 620,610 700,650 800,650 900,690"/>
 <path d="M460,640L540,650 590,640 640,620M460,760L520,720 560,680 640,670M620,680L620,880M640,680L635,880M460,690L560,740 640,745"/>
 <path d="M700,690L750,730 760,780 790,810 770,880 750,950 790,1000 770,1060M700,790L760,790"/>
 <path d="M960,710L950,770 1000,820 980,900 960,970M960,710L1040,730 1100,760 1200,720 1330,700 1380,710M1100,760L1080,800 1110,870 1100,960 1160,1050"/>
 <path d="M1110,840L1200,830 1230,880 1330,920 1476,930M1130,700L1200,740 1300,760M460,930L560,950 600,930 700,940 800,970 900,975 1000,970 1060,950 1100,960"/>
 <path d="M460,985L560,990 640,1030 740,1050 850,1080 960,1100 1060,1060 1140,1060 1280,1070 1330,1120 1320,1170 1330,1250"/>
 <path d="M460,1100L540,1105 680,1110 800,1100M530,1000L540,1100 520,1200M830,1170L900,1165 980,1190 1100,1200 1200,1190 1300,1220 1400,1190 1460,1210"/>
 <path d="M1160,1050L1180,1120 1130,1160 960,1190 900,1240 860,1260M900,1250L960,1230 1050,1230 1130,1240 1170,1290 1160,1380"/>
 <path d="M600,1100L640,1200 680,1240 660,1290 560,1320M540,1310L680,1330 760,1350 820,1350 860,1330 960,1340 1000,1320"/>
 <path d="M740,1380L740,1440 800,1500 820,1568M640,1500L740,1450M900,1450L980,1440 1060,1430 1140,1370 1200,1330 1300,1310 1476,1310"/>
 <path d="M1040,1500L1100,1450 1200,1400 1240,1350 1280,1240 1320,1300 1370,1350 1340,1400 1290,1430M1290,1440L1340,1500 1310,1568M1400,1440L1420,1568M1000,1568L1030,1490"/>
 <path d="M1476,1090L1430,1100 1400,1140 1330,1130M560,1480L600,1440 680,1440 720,1420M430,1410L470,1440 440,1470 530,1475 550,1500 460,1520 450,1550"/>
 </g>
 <g transform="matrix(.54422 0 0 .28444 0 1675.7)">
 <path d="M0,240L40,255 65,290 75,340 75,480 110,540 140,580M75,480L95,560 75,650 40,700 35,750 65,820 20,950 15,1200M0,600L30,620 90,600 150,640"/>
 <path d="M110,540L150,470 190,450 215,490 240,450 440,635 590,655 590,700 597,900 575,1050 590,1200M280,1000L280,1200M340,790L410,830 460,895 540,800 660,810 710,785 775,795 840,870 950,1200M860,955L840,1050 790,1130 690,1190M780,1130L790,1200"/>
 <path d="M990,445L1030,580 1090,630 1150,700 1230,775M1170,440L1240,560 1300,730M1300,440L1240,550M1230,775L1320,705 1360,730 1390,715 1440,710M1440,440L1450,570 1420,720 1340,1040 1350,1110M1150,940L1230,790M1180,1040L1300,1180M1420,790L1480,1000 1520,1060 1520,1110 1568,1105"/>
 <path d="M1430,720L1480,640 1530,580 1568,590M1568,660L1510,730 1505,850 1540,930"/>
 </g>
</g>
<g id="rb">
 <g transform="matrix(.9143 0 0 .5442 0 -5.4)"><path d="M635,925L690,930 740,1010 800,1105 850,1120 905,1140 910,1220 880,1290 920,1305 980,1290 1035,1180 1045,1080 1080,1010 1180,945 1240,960 1320,920 1370,1030 1420,1130 1440,1210 1480,1200 1540,1150M735,1568L733,1380 790,1330 860,1325 880,1280M1195,1568L1195,1480"/></g>
 <g transform="matrix(.43537 0 0 .78911 768 779.67)"><path d="M745,50L745,160 755,265M685,405L688,670 655,750 660,950 665,1110 640,1150 545,1230 550,1350 545,1450 560,1568M460,850L520,890 540,940 520,1100 480,1220 545,1260M355,1310L470,1390 550,1470M550,1355L640,1420 770,1500 780,1568M710,258L820,255 1040,230 1140,205 1200,210 1420,290"/></g>
</g>
<g id="rg">
 <g transform="matrix(.9143 0 0 .5442 0 -5.4)"><path d="M555,10L555,250 515,320 525,420 505,600 560,690 600,830 635,925M1085,10L1060,80 1050,400 1058,700 1100,990M1040,345L960,440 900,515 860,490 820,620 790,660 690,640 640,780 605,850M1165,960L1200,810 1280,755 1340,830 1380,820 1410,760 1500,725 1545,755"/></g>
 <g transform="matrix(.54422 0 0 .28444 0 1675.7)"><path d="M1480,445L1460,640 1400,960 1398,1150M1470,600L1568,650"/></g>
 <g transform="matrix(.43537 0 0 .78911 768 779.67)"><path d="M80,1354L200,1372 350,1390 550,1355"/></g>
</g>
<g id="jc"><circle r="19" fill="#fbe3a5" stroke="#a2845c" stroke-width="3"/><text y="7" text-anchor="middle" style="stroke:none;fill:#8a6a48;font-size:19px">JC</text></g>
<g id="dot"><circle r="9" fill="#fff" stroke="#444" stroke-width="3"/><circle r="4" fill="#333"/></g>
<g id="shield"><path d="M-26,-22Q-14,-17 0,-27Q14,-17 26,-22Q32,-6 28,8Q18,24 0,31Q-18,24 -28,8Q-32,-6 -26,-22Z" fill="#5170e2" stroke="#fff" stroke-width="3"/><path d="M-26,-22Q-14,-17 0,-27Q14,-17 26,-22L27,-13H-27Z" fill="#e4504e"/></g>
<g id="tree"><circle r="19" fill="#5fa54f"/><path fill="#fff" d="M0,-13L7,-3H4L10,7H2V12H-2V7H-10L-4,-3H-7Z"/></g>
<filter id="soft"><feGaussianBlur stdDeviation="22"/></filter>
</defs>
<rect width="1411" height="2017" fill="#f9f9f8"/>
<g fill="#e7f0e8" filter="url(#soft)" opacity=".85">
<path d="M720,0H1411V420L1250,330 1130,250 1050,300 960,200 860,160 820,80Z"/><path d="M820,240L930,260 950,400 900,520 780,500 790,380Z"/><path d="M1230,320L1411,330V560L1290,520Z"/><path d="M1130,760L1411,640V1250L1300,1200 1180,1120 1150,950Z"/><path d="M1080,1120L1200,1080 1290,1180 1150,1280 1040,1240Z"/><path d="M1200,1330L1400,1350 1411,1700 1300,1650 1240,1560Z"/><path d="M880,760L1050,830 1030,920 980,960Z"/><path d="M1020,1640L1160,1600 1240,1680 1100,1760Z"/><path d="M60,180L120,200 110,280 60,270Z"/><path d="M620,440L740,560 700,600 600,520Z"/>
</g>
<g fill="#a3d6ea">
 <g transform="matrix(.9143 0 0 .5442 0 -5.4)">
 <path d="M0,140L35,185 60,225 100,245 150,240 200,230 200,200 320,200 332,60 345,10 375,15 370,50 345,90 345,200 345,250 300,268 245,290 225,345 160,345 120,290 85,285 62,310 72,330 70,370 55,400 62,450 42,480 35,540 62,590 78,620 62,690 58,750 80,780 88,800 70,830 62,800 45,760 45,680 55,620 30,560 28,490 45,460 38,400 45,310 40,260 0,200Z"/>
 <path d="M0,885L62,868 80,900 105,905 110,985 160,1030 175,1100 215,1110 215,1150 150,1180 120,1230 70,1280 0,1330Z"/>
 <path d="M120,1230L180,1170 230,1160 280,1180 265,1260 250,1400 210,1420 180,1440 190,1500 240,1540 260,1568H0V1480L90,1490 150,1470 110,1400 120,1340Z"/>
 <path d="M1540,1380L1520,1400 1525,1450 1545,1500Z"/>
 </g>
 <path d="M0,800H120L47,900V1740L0,1715Z"/>
 <g transform="matrix(.54422 0 0 .28444 0 1675.7)">
 <path d="M0,-400H85V290L75,240 50,190 48,170 0,140Z"/>
 <path d="M230,440H950L960,540 905,580 930,680 990,670 1040,750 1080,900 1110,1000 1190,1130 1240,1200H945L905,960 912,830 850,760 790,750 700,700 655,650 600,640 590,680 520,720 492,780 480,850 440,930 410,960 400,990 410,940 455,860 462,720 380,620 345,600 360,570 260,490Z"/>
 <path d="M960,440L1020,440 1010,500 1140,500 1165,440 1120,550 965,575Z"/>
 <path d="M0,820L40,830 85,780 55,860 100,970 150,1200H130L90,1000 40,870 0,850Z"/>
 <path d="M1568,770L1540,800 1535,900 1568,1000Z"/>
 </g>
 <g transform="matrix(.43537 0 0 .78911 768 779.67)"><path d="M640,670L667,680 660,735 640,735ZM1055,990L1075,990 1080,1010 1125,1035 1130,1060 1080,1065 1017,1055 1070,1038ZM510,565L525,580 515,590Z"/><path d="M150,1430L215,1470 225,1568H165L190,1500Z"/><path fill="none" stroke="#a3d6ea" stroke-width="12" d="M150,1450L175,1400 270,1388 330,1420 400,1425 420,1390 520,1375"/></g>
</g>
<g fill="#f9f9f8"><path d="M0,560L30,570 38,530 55,540 42,590 10,580ZM0,720L60,726 75,750 40,790 0,780ZM85,812L110,816 95,850ZM13,1285L47,1300 42,1330 18,1345ZM590,1930L610,1990 600,2010 580,1975ZM530,1868L545,1850 552,1870 540,1885Z"/></g>
<g fill="none" stroke="#a3d6ea">
 <g transform="matrix(.9143 0 0 .5442 0 -5.4)">
 <path stroke-width="31" d="M330,255L342,330 340,410 325,500 320,600 330,680 400,770 470,850 530,920 580,985 630,1040 690,1100 745,1170 800,1250 850,1310 900,1330 960,1315 1000,1250 1050,1240 1120,1290 1170,1240 1190,1160 1220,1110 1280,1060 1320,1030"/>
 <path stroke-width="16" d="M1345,1040L1380,1110 1400,1190 1440,1240 1480,1290 1530,1330 1545,1400"/>
 <path stroke-width="2" d="M340,90L430,80 520,200M640,60L740,100M655,440L660,520 640,600M1000,300L980,370M1440,180L1420,260M1340,420L1360,520M760,480L730,560M200,400L160,480M470,700L440,750M880,560L860,620M1070,240L1100,320M1460,900L1440,960M150,820L230,830M950,1420L1000,1460"/>
 </g>
 <g transform="matrix(.43537 0 0 .78911 768 779.67)"><path stroke-width="2" d="M500,340L540,400 480,420M900,440L1000,420 1040,440M1100,900L1090,960M830,900L860,960M600,1000L560,1060 470,1090M900,1400L930,1450 1000,1440M1290,460L1350,500M1080,1220L1150,1240M1340,1000L1300,1080M650,1400L700,1470 760,1490"/></g>
 <g transform="matrix(.54422 0 0 .28444 0 1675.7)"><path stroke-width="3" d="M705,700L710,830 690,900 660,960M700,900L740,1000M330,930L360,980M420,1000L400,1080 430,1200M680,1050L640,1120 600,1140M1330,780L1340,880"/></g>
</g>
<g fill="none" stroke="#a9a59c" stroke-width="2" stroke-dasharray="7 5">
 <g transform="matrix(.9143 0 0 .5442 0 -5.4)"><path d="M325,20L315,200 340,300 345,500 335,640M770,120L780,60M800,240L850,220 880,250 830,280M600,480L640,460 690,480 740,540 820,470 810,380M370,880L380,960 430,1000 520,960M110,960L150,990 160,920 240,880M970,300L1040,290 1090,360 1200,340M1460,280L1545,320M1470,250L1460,100M1380,1080L1360,1000M700,1290L640,1400 580,1330M1480,1060L1430,1100M920,1160L960,1200 1000,1190M1090,1330L1140,1400M380,1110L410,1160 390,1240 350,1250M1190,40L1180,260"/><path stroke="#8fc28c" stroke-width="4" stroke-dasharray="8 6" d="M925,530L930,600 880,610 880,680 845,740 840,920 950,925 990,870 980,740 1040,640 1030,460 990,440 930,540"/><path stroke="#555" stroke-width="3" stroke-dasharray="14 4 3 4" d="M0,150L60,210 120,290 180,302 230,290 300,230 320,180 330,60 345,10"/></g>
 <g transform="matrix(.43537 0 0 .78911 768 779.67)"><path d="M600,90L690,60M550,540L620,500 600,440M740,290L880,310 870,360M1000,440L1080,510 1100,440M1120,380L1240,360 1290,400M720,700L690,750 600,760M880,750L900,800 890,850 940,900M460,820L530,810 560,850 560,900 600,920M1200,600L1300,560M1410,860L1380,930 1420,1020M700,1155L760,1150 780,1200 690,1190 690,1160M840,1110L900,1130 980,1120 1050,1110M900,1480L960,1530 1060,1520M1080,1340L1150,1300"/></g>
 <path stroke="#6f93a3" stroke-width="3" d="M0,975L47,930M0,1015L47,950M0,1115L47,1065M0,1185H47M0,1300L47,1240"/>
</g>
<g fill="none">
<use href="#rd" stroke="#d6c25c" stroke-width="8"/><use href="#rd" stroke="#fbe780" stroke-width="5"/>
<use href="#rg" stroke="#b5b5b5" stroke-width="5"/><use href="#rg" stroke="#f1f1f1" stroke-width="2" stroke-dasharray="12 12"/>
<use href="#hw" stroke="#f2a07c" stroke-width="13"/><use href="#hw" stroke="#fdc07c" stroke-width="9"/>
<use href="#rb" stroke="#87a5d6" stroke-width="6"/><use href="#rb" stroke="#f4f7fc" stroke-width="3" stroke-dasharray="11 13"/>
</g>
<!-- cities -->
<g class="city">
<use href="#dot" x="496" y="171"/><text x="507" y="184">파주</text><use href="#dot" x="964" y="115"/><text x="976" y="128">양주</text><use href="#dot" x="942" y="219"/><text x="954" y="232">의정부</text><use href="#dot" x="586" y="396"/><text x="598" y="409">고양</text><use href="#dot" x="381" y="491"/><text x="393" y="504">김포</text><use href="#dot" x="1264" y="447"/><text x="1276" y="460">남양주</text><use href="#dot" x="1111" y="538"/><text x="1122" y="551">구리</text><use href="#dot" x="1262" y="661"/><text x="1274" y="674">하남</text><use href="#dot" x="469" y="740"/><text x="481" y="753">부천</text><use href="#dot" x="644" y="795"/><text x="656" y="808">광명</text><use href="#dot" x="1106" y="926"/><text x="1118" y="939">성남</text><use href="#dot" x="1335" y="904"/><text x="1347" y="917">광주</text><use href="#dot" x="1198" y="1323"/><text x="1210" y="1336">용인</text><use href="#dot" x="1020" y="1525"/><text x="1033" y="1538">오산</text><use href="#dot" x="1083" y="1875"/><text x="1096" y="1888">평택</text><use href="#dot" x="1381" y="1839"/><text x="1393" y="1852">안성</text><text x="944" y="1287">수원</text>
<circle cx="845" cy="600" r="13" fill="#fff0c8" stroke="#333" stroke-width="3"/><circle cx="845" cy="600" r="7"/><text x="862" y="615" font-size="40" style="fill:#111">서울</text>
<use href="#dot" x="361" y="835"/><text x="376" y="852" font-size="40">인천</text>
</g>
<!-- junctions -->
<use href="#jc" x="1134" y="48"/><use href="#jc" x="391" y="397"/><use href="#jc" x="527" y="487"/><use href="#jc" x="668" y="632"/><use href="#jc" x="835" y="735"/><use href="#jc" x="934" y="653"/><use href="#jc" x="1075" y="681"/><use href="#jc" x="1182" y="714"/><use href="#jc" x="1310" y="787"/><use href="#jc" x="1051" y="956"/><use href="#jc" x="1300" y="982"/><use href="#jc" x="1066" y="1213"/><use href="#jc" x="1327" y="1296"/><use href="#jc" x="1130" y="1778"/><use href="#jc" x="1390" y="1011"/><use href="#jc" x="831" y="1788"/><use href="#jc" x="652" y="1927"/><use href="#jc" x="740" y="2008"/>
<g class="jl"><text x="1134" y="91">소흘</text><text x="391" y="440">이산포</text><text x="527" y="530">자유로</text><text x="668" y="675">염창</text><text x="835" y="777">동작대교</text><text x="934" y="691">성수</text><text x="1075" y="724">올림픽대교</text><text x="1182" y="757">서하남</text><text x="1310" y="831">산곡</text><text x="1051" y="999">판교</text><text x="1300" y="1025">태전</text><text x="1066" y="1257">신갈</text><text x="1327" y="1340">용인</text><text x="1130" y="1821">안성</text><text x="1395" y="1054">성남</text><text x="831" y="1830">평택</text><text x="652" y="1970">포승</text></g>
<!-- route numbers -->
<g fill="#5676ec" stroke="#3355c4" stroke-width="3"><circle cx="1282" cy="124" r="25"/><circle cx="1196" cy="418" r="25"/><circle cx="660" cy="735" r="25"/><circle cx="206" cy="804" r="25"/><circle cx="1240" cy="1445" r="26"/><circle cx="1412" cy="1351" r="25"/><circle cx="1105" cy="811" r="25"/></g>
<use href="#shield" x="180" y="431"/><use href="#shield" x="330" y="694"/><use href="#shield" x="1099" y="314"/><use href="#shield" x="986" y="1170"/>
<g class="num" text-anchor="middle" font-size="24" font-weight="600" fill="#fff"><text x="1282" y="133">47</text><text x="1196" y="427">46</text><text x="660" y="744">1</text><text x="206" y="813">42</text><text x="1240" y="1454">45</text><text x="180" y="442">400</text><text x="330" y="705">120</text><text x="1099" y="325">29</text><text x="986" y="1181">171</text></g>
<!-- places -->
<use href="#tree" x="867" y="370"/><use href="#tree" x="1216" y="799"/>
<g text-anchor="middle" font-size="28" font-weight="500" fill="#4d8a3f"><text x="867" y="417">북한산</text><text x="867" y="449">국립공원</text><text x="1216" y="847">남한산성</text><text x="1216" y="879">도립공원</text></g>
<circle cx="533" cy="617" r="18" fill="#7098a8"/><path fill="#fff" d="M-13,-2H-4L-1,-12H2L4,-2H10L12,-6H14L13,0 14,6H12L10,2H4L2,12H-1L-4,2H-13Z" transform="translate(533 617)"/>
<g text-anchor="middle" font-size="28" font-weight="500" fill="#3f7290"><text x="533" y="664">김포국제공항</text><text x="533" y="697">국내선</text><text x="659" y="590" font-size="27">난지도</text><text x="54" y="750" font-size="27">영종도</text><text x="155" y="762" font-size="27">물치도</text><text x="5" y="1195" font-size="27">도</text><text x="18" y="973" transform="rotate(-42 18 973)" font-size="27">4시간</text></g>
<circle cx="1399" cy="1109" r="19" fill="#3aa0e2"/><path fill="none" stroke="#fff" stroke-width="3" d="M1388,1101L1410,1116M1408,1098L1396,1106 1404,1112"/>
<g font-size="28" font-weight="500" fill="#2f93cf"><text x="1327" y="1157">곤지암리조트</text><text x="1366" y="1188">스키장</text><text x="1382" y="1424">지산</text><text x="1370" y="1681" fill="#3f7290">동그산</text></g>
<path id="sj" fill="none" d="M1347,1455Q1375,1560 1420,1640"/><path id="py" fill="none" d="M890,1813L1000,1810Q1060,1790 1110,1795"/><path id="sd" fill="none" d="M925,808L1000,895"/>
<g class="hwn" font-weight="700"><text><textPath href="#sj">세종포천고속도로</textPath></text><text><textPath href="#py">평택영월고속도로</textPath></text><text><textPath href="#sd">고속도로</textPath></text><text x="10" y="820" transform="rotate(60 10 820)">인천대교</text></g>
</svg>

<div class="maptools d-flex">
  <button class="btn" type="button"><svg class="ico" viewBox="0 0 512 512"><use href="#layers"/></svg>지적편집도</button>
  <button class="btn" type="button"><svg class="ico" viewBox="0 0 512 512"><use href="#won"/></svg>실거래가</button>
  <button class="btn" type="button"><svg class="ico" viewBox="0 0 512 512"><use href="#street"/></svg>로드뷰</button>
</div>
<div class="cluster" style="left:763px;top:645px">8</div>
<div class="cluster big" style="left:947px;top:750px">15</div>
<div class="cluster" style="left:1090px;top:755px">4</div>
<div class="cluster one" style="left:325px;top:788px">1</div>
<div class="cluster one" style="left:1075px;top:1047px">1</div>

<div class="mapscale d-flex align-items-end"><i></i><span>8km</span><b>kakao</b></div>
<button class="btn btn-fill fab border-0" type="button" aria-label="고객센터"><svg class="ico" viewBox="0 0 512 512"><use href="#headset"/></svg></button>

<div class="desk">
  <div class="deskhead d-flex align-items-center">
    <svg class="ico" viewBox="0 0 512 512"><use href="#headset"/></svg>
    <div><h2>고객센터</h2><p>평일 10:00 - 17:00</p></div>
    <button class="btn ms-auto" type="button" aria-label="닫기">×</button>
  </div>
  <a class="faq d-flex align-items-center" href="#"><span class="faqico"><svg class="ico" viewBox="0 0 512 512"><use href="#quest"/></svg></span>자주 묻는 질문<span class="go"><svg class="ico" viewBox="0 0 256 512"><use href="#right"/></svg></span></a>
  <a class="faq d-flex align-items-center" href="#"><span class="faqico"><svg class="ico" viewBox="0 0 576 512"><use href="#open"/></svg></span>조부장 사용설명서<span class="go"><svg class="ico" viewBox="0 0 256 512"><use href="#right"/></svg></span></a>
  <div class="talk d-flex flex-column align-items-center justify-content-center"><div>아직 대화 내용이 없습니다.</div><div>아래에 메시지를 남겨주시면 답변드릴게요.</div></div>
  <form class="compose d-flex align-items-center">
    <button class="btn clip" type="button" aria-label="파일 첨부"><svg class="ico" viewBox="0 0 448 512"><use href="#pclip"/></svg></button>
    <textarea class="form-control" placeholder="메시지를 입력해주세요" aria-label="메시지"></textarea>
    <button class="btn send" type="button" aria-label="보내기"><svg class="ico" viewBox="0 0 512 512"><use href="#plane"/></svg></button>
  </form>
</div>
</section>

<div class="split position-relative"><button class="btn grip" type="button" aria-label="너비 조절"><svg class="ico" viewBox="0 0 512 320"><use href="#lr"/></svg></button></div>

<main class="panel flex-grow-1 bg-white">
  <div class="phead d-flex align-items-center">
    <svg class="ico" viewBox="0 0 512 512"><use href="#list"/></svg>
    <h1>매물 목록</h1><span class="total">전체 31</span>
    <div class="mode d-flex ms-auto"><button class="btn" type="button"><svg class="ico" viewBox="0 0 512 512"><use href="#tlist"/></svg>목록</button><button class="btn on" type="button"><svg class="ico" viewBox="0 0 512 512"><use href="#table"/></svg>시트</button></div>
  </div>
  <div class="notice d-flex align-items-center"><svg class="ico" viewBox="0 0 512 512"><use href="#gift"/></svg><span>무료 체험 중 — 매물 <b>31</b> / 1,000건</span></div>
  <div class="filters"><button class="btn src" type="button"><svg class="ico" viewBox="0 0 448 512"><use href="#tag"/></svg>데이터출처 <small>전체</small><svg class="ico" viewBox="0 0 512 512"><use href="#down"/></svg></button></div>
  <div class="sheetwrap">
    <div class="kinds d-flex">
      <button class="btn on" type="button">아파트<span>10</span></button><button class="btn" type="button">빌라/투룸+<span>4</span></button><button class="btn" type="button">원룸<span>3</span></button><button class="btn" type="button">오피스텔<span>4</span></button><button class="btn" type="button">상가<span>3</span></button><button class="btn" type="button">사무실<span>2</span></button><button class="btn" type="button">지산<span>2</span></button><button class="btn" type="button">토지<span>1</span></button><button class="btn" type="button">창고/공장<span>1</span></button><button class="btn none" type="button">미분류<span>1</span></button>
    </div>
    <table class="table sheet">
      <colgroup><col width="58"><col width="215"><col width="479"><col width="171"><col width="175"><col width="173"><col width="174"><col width="149"><col width="494"><col width="262"><col width="88"></colgroup>
      <thead><tr id="hd"></tr></thead>
      <tbody id="rows"></tbody>
    </table>
  </div>
</main>

<aside class="rail d-flex flex-column">
  <button class="btn" type="button"><svg class="ico" viewBox="0 0 448 512"><use href="#dcheck"/></svg>전체</button>
  <button class="btn" type="button"><svg class="ico" viewBox="0 0 384 512"><use href="#xmark"/></svg>해제</button>
  <button class="btn" type="button"><svg class="ico" viewBox="0 0 448 512"><use href="#copy"/></svg>소개</button>
  <button class="btn" type="button"><svg class="ico" viewBox="0 0 640 512"><use href="#link"/></svg>맞춤매물</button>
  <button class="btn" type="button"><svg class="ico" viewBox="0 0 448 512"><use href="#box"/></svg>담기</button>
  <button class="btn" type="button"><svg class="ico" viewBox="0 0 512 512"><use href="#plane"/></svg>전송</button>
  <button class="btn" type="button"><svg class="ico" viewBox="0 0 384 512"><use href="#excel"/></svg>엑셀</button>
  <button class="btn" type="button"><svg class="ico" viewBox="0 0 576 512"><use href="#images"/></svg>이미지</button>
  <button class="btn" type="button"><svg class="ico" viewBox="0 0 448 512"><use href="#trash"/></svg>삭제</button>
  <button class="btn" type="button"><svg class="ico" viewBox="0 0 512 512"><use href="#funnel"/></svg><span>필터↺</span></button>
  <button class="btn" type="button"><svg class="ico" viewBox="0 0 512 512"><use href="#rotate"/></svg>새로고침</button>
</aside>
</div>
</div>
<script>
const heads=['데이터 수정','물건유형','거래방식','진행상태','물건순위','담당자','주소','단지명','동'];
document.getElementById('hd').innerHTML='<th><input type="checkbox" aria-label="전체 선택"></th><th class="sm">데이터출처</th>'+heads.map(h=>`<th><div class="d-flex align-items-center justify-content-between">${h}<button class="sortb" type="button" aria-label="${h} 필터"><i></i></button></div></th>`).join('');
const data=[
[0,'2026-05-17T11:57:44.806233+00:00','매매','확정매물','김조부','서울 마포구 상수동 마포래미안푸르지오','마포래미안푸르지오'],
[0,'2026-06-17T08:13:11.106Z','전세','확정매물','이부장','서울 마포구 공덕동 공덕자이','공덕자이'],
[0,'2026-05-18T11:57:44.806233+00:00','매매','보류','김조부','서울 용산구 한남동 한남더힐','한남더힐'],
[1,'2026-05-19T11:57:44.806233+00:00','월세','확정매물','김부장','서울 송파구 신천동 파크리오','파크리오'],
[0,'2026-10-22T06:10:39.838169+00:00','매매','확정매물','김조부','서울 송파구 잠실동 19','잠실엘스'],
[0,'2026-05-20T11:57:44.806233+00:00','전세','확정매물','이부장','서울 서초구 잠원동 신반포자이','신반포자이'],
[0,'2026-05-21T07:57:44.806233+00:00','매매','확정매물','박실장','서울 서초구 반포동 래미안퍼스티지','래미안퍼스티지'],
[1,'2026-05-21T11:57:44.806233+00:00','월세','계약중','김부장','서울 강남구 도곡동 도곡렉슬','도곡렉슬'],
[0,'2026-05-22T11:57:44.806233+00:00','전세','확정매물','이부장','서울 강남구 청담동 134 청담자이','청담자이'],
[0,'2026-10-23T07:10:39.838169+00:00','매매','확정매물','김조부','서울 강남구 역삼동 707-25 e편한세상','역삼 e편한세상']];
document.getElementById('rows').innerHTML=data.map((r,i)=>`<tr><td><input type="checkbox" aria-label="${i+1}행 선택"></td><td><span class="tagm${r[0]?' sub':''}">${r[0]?'sub1 · <b>김부장</b>':'main · <b>주계정</b>'}</span></td><td class="dt">${r[1]}</td><td>아파트</td><td>${r[2]}</td><td>${r[3]}</td><td></td><td>${r[4]}</td><td>${r[5]}</td><td>${r[6]}</td><td></td></tr>`).join('');
</script>
<script src="https://cdn.jsdelivr.net/npm/bootstrap@5.3.0/dist/js/bootstrap.bundle.min.js"></script>
</body>
</html>
